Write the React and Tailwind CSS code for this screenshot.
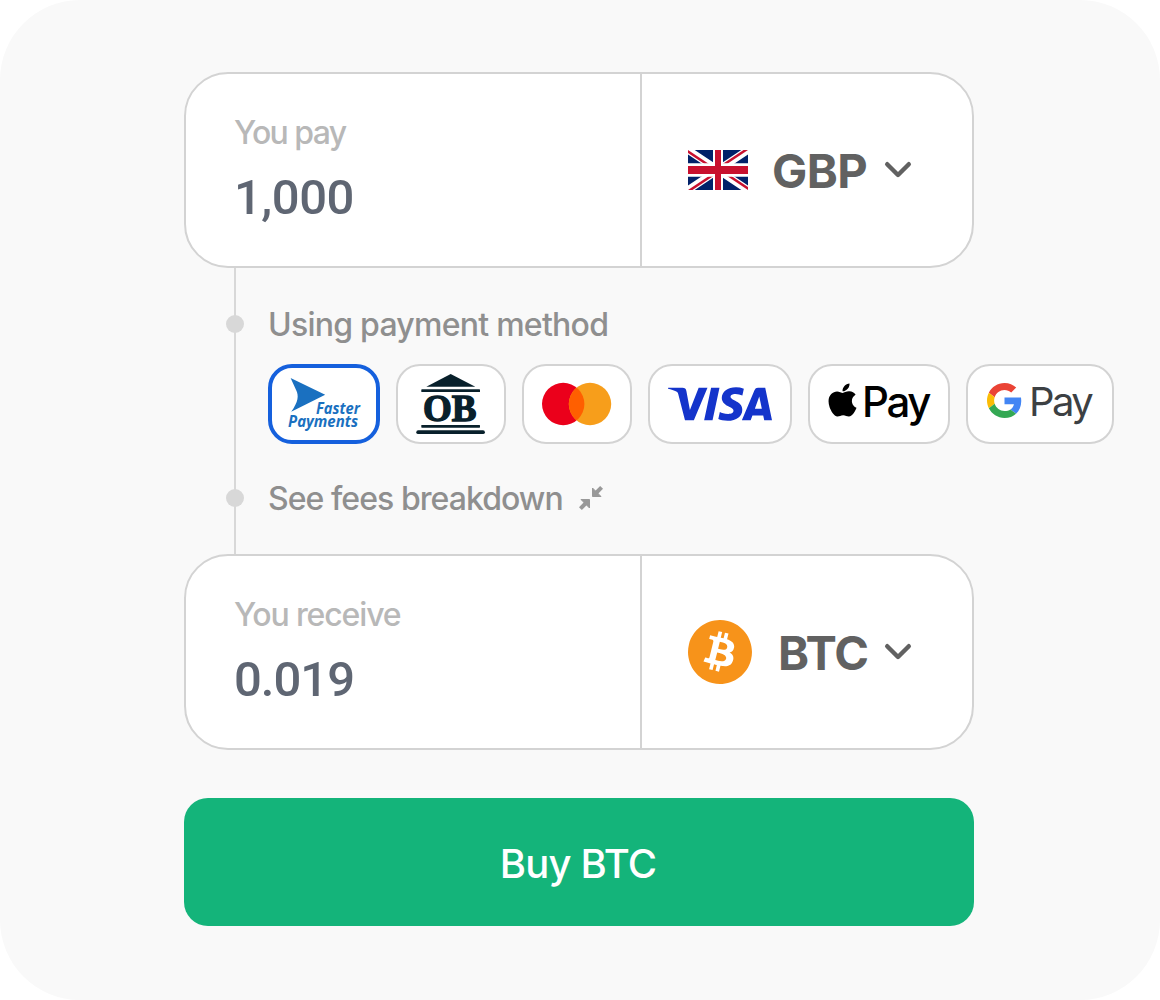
import { FaApple } from 'react-icons/fa';
import { SiBitcoin, SiVisa } from 'react-icons/si';

const ChevronDown = () => (
  <svg viewBox="0 0 28 20" className="w-7 h-5 shrink-0" fill="none" stroke="#616161" strokeWidth="4.4" strokeLinecap="round" strokeLinejoin="round">
    <path d="M3.2 4.2 L14 15 L24.8 4.2" />
  </svg>
);

const CollapseIcon = () => (
  <svg viewBox="0 0 24 24" className="w-6 h-6 ml-4 shrink-0 text-[#999]" fill="currentColor" stroke="currentColor" strokeLinejoin="round">
    <path d="M13.5 2 V10.5 H22 Z" strokeWidth="1" />
    <path d="M22.6 1.4 L16 8" strokeWidth="4" />
    <path d="M10.5 22 V13.5 H2 Z" strokeWidth="1" />
    <path d="M1.4 22.6 L8 16" strokeWidth="4" />
  </svg>
);

const UkFlag = () => (
  <svg viewBox="0 0 60 30" preserveAspectRatio="none" className="w-[60px] h-10 shrink-0">
    <clipPath id="uk-box">
      <path d="M0,0 v30 h60 v-30 z" />
    </clipPath>
    <clipPath id="uk-diagonals">
      <path d="M30,15 h30 v15 z v15 h-30 z h-30 v-15 z v-15 h30 z" />
    </clipPath>
    <g clipPath="url(#uk-box)">
      <path d="M0,0 v30 h60 v-30 z" fill="#012169" />
      <path d="M0,0 L60,30 M60,0 L0,30" stroke="#fff" strokeWidth="6" />
      <path d="M0,0 L60,30 M60,0 L0,30" clipPath="url(#uk-diagonals)" stroke="#c8102e" strokeWidth="4" />
      <path d="M30,0 v30 M0,15 h60" stroke="#fff" strokeWidth="10" />
      <path d="M30,0 v30 M0,15 h60" stroke="#c8102e" strokeWidth="6" />
    </g>
  </svg>
);

const FasterPayments = () => (
  <svg viewBox="4 4 104 72" className="w-[104px] h-[72px]">
    <path d="M22.6 14 L57.2 30.8 L23.2 47.8 C30.5 37.5 30.8 31.5 28.2 26.2 Z" fill="#1a70c0" />
    <g fill="#1a70c0" fontFamily="'Open Sans', 'Noto Sans', sans-serif" fontWeight="700" fontStyle="italic" fontSize="15.5">
      <text x="48" y="49.8" textLength="44" lengthAdjust="spacingAndGlyphs">Faster</text>
      <text x="20" y="62.5" textLength="70" lengthAdjust="spacingAndGlyphs">Payments</text>
    </g>
  </svg>
);

const OpenBanking = () => (
  <svg viewBox="2 2 106 76" className="w-[106px] h-[76px]" fill="#08202b">
    <path d="M54.7 10 L79.3 22.8 H30.3 Z" />
    <rect x="25.3" y="25.3" width="58.7" height="2.7" rx="0.6" />
    <text x="27" y="57.3" fontFamily="'Liberation Serif', serif" fontWeight="700" fontSize="38" textLength="53.5" lengthAdjust="spacingAndGlyphs" stroke="#08202b" strokeWidth="1.4">OB</text>
    <rect x="25.3" y="61" width="58.7" height="2.7" rx="0.6" />
    <rect x="20.3" y="66.3" width="68.6" height="3.8" rx="1.9" />
  </svg>
);

const Mastercard = () => (
  <svg viewBox="2 2 106 76" className="w-[106px] h-[76px]">
    <clipPath id="mc-left">
      <circle cx="41.2" cy="40" r="21.2" />
    </clipPath>
    <circle cx="41.2" cy="40" r="21.2" fill="#eb001b" />
    <circle cx="68" cy="40" r="21.2" fill="#f79e1b" />
    <circle cx="68" cy="40" r="21.2" fill="#ff5f00" clipPath="url(#mc-left)" />
  </svg>
);

const ApplePay = () => (
  <div className="flex items-center pb-1">
    <FaApple className="w-[31px] h-[38px] -mt-1 -ml-0.5 text-black" />
    <span className="ml-1 text-[42px] leading-none font-medium tracking-[-2.4px] text-black">Pay</span>
  </div>
);

const GooglePay = () => (
  <div className="flex items-center pb-1 pr-0.5">
    <svg viewBox="0 0 48 48" className="w-[35px] h-[35px] -mt-1">
      <path fill="#ea4335" d="M24 9.5c3.54 0 6.71 1.22 9.21 3.6l6.85-6.85C35.9 2.38 30.47 0 24 0 14.62 0 6.51 5.38 2.56 13.22l7.98 6.19C12.43 13.72 17.74 9.5 24 9.5z" />
      <path fill="#4285f4" d="M46.98 24.55c0-1.57-.15-3.09-.38-4.55H24v9.02h12.94c-.58 2.96-2.26 5.48-4.78 7.18l7.73 6c4.51-4.18 7.09-10.36 7.09-17.65z" />
      <path fill="#fbbc05" d="M10.53 28.59c-.48-1.45-.76-2.99-.76-4.59s.27-3.14.76-4.59l-7.98-6.19C.92 16.46 0 20.12 0 24c0 3.88.92 7.54 2.56 10.78l7.97-6.19z" />
      <path fill="#34a853" d="M24 48c6.48 0 11.93-2.13 15.89-5.81l-7.73-6c-2.15 1.45-4.92 2.3-8.16 2.3-6.26 0-11.57-4.22-13.47-9.91l-7.98 6.19C6.51 42.62 14.62 48 24 48z" />
    </svg>
    <span className="ml-[7px] text-[40px] leading-none font-normal tracking-[-2.6px] text-[#3c4043]">Pay</span>
  </div>
);

const methods = [
  { id: 'fps', width: 'w-[112px]', logo: <FasterPayments />, selected: true },
  { id: 'ob', width: 'w-[110px]', logo: <OpenBanking /> },
  { id: 'mc', width: 'w-[110px]', logo: <Mastercard /> },
  { id: 'visa', width: 'w-[144px]', logo: <SiVisa className="w-[104px] h-[104px] shrink-0 text-[#1434cb]" /> },
  { id: 'apple', width: 'w-[142px]', logo: <ApplePay /> },
  { id: 'google', width: 'w-[148px]', logo: <GooglePay /> },
];

const AmountCard = ({ label, labelClass, value, valueClass, children }) => (
  <div className="flex w-[790px] h-[196px] bg-white border-2 border-[#d3d3d3] rounded-[44px]">
    <div className="w-[454px] pl-12 pt-[38px]">
      <div className={`text-[32px] leading-[42px] font-medium text-[#b8b8b8] ${labelClass}`}>{label}</div>
      <div className={`mt-4 font-[Roboto,sans-serif] text-[49px] leading-[56px] font-medium text-[#5f6673] ${valueClass}`}>{value}</div>
    </div>
    <div className="flex flex-1 items-center pl-[46px] border-l-2 border-[#d3d3d3]">{children}</div>
  </div>
);

const Step = ({ label, labelClass, icon }) => (
  <div className="flex items-center h-10">
    <span className="w-[18px] h-[18px] -ml-[10px] rounded-full bg-[#d8d8d8]" />
    <span className={`ml-6 pt-0.5 text-[32px] leading-10 font-medium text-[#8f8f8f] ${labelClass}`}>{label}</span>
    {icon}
  </div>
);

const App = () => {
  return (
    <div className="w-[1160px] h-[1000px] pt-[72px] pl-[184px] overflow-hidden bg-[#f9f9f9] rounded-[80px] font-[Inter,sans-serif]">
      <AmountCard label="You pay" labelClass="tracking-[-1.6px]" value="1,000" valueClass="tracking-[-0.5px]">
        <UkFlag />
        <span className="w-[114px] pl-6 text-[47px] leading-none font-bold tracking-[-0.5px] text-[#616161]">GBP</span>
        <span className="ml-[22px]"><ChevronDown /></span>
      </AmountCard>

      <div className="ml-[50px] h-[286px] pt-9 border-l-2 border-[#d8d8d8]">
        <Step label="Using payment method" labelClass="tracking-[-0.75px]" />
        <div className="flex gap-4 mt-5 ml-8">
          {methods.map((m) => (
            <button
              key={m.id}
              className={`flex items-center justify-center shrink-0 h-20 bg-white rounded-[24px] ${m.width} ${m.selected ? 'border-4 border-[#1560dd]' : 'border-2 border-[#d3d3d3]'}`}
            >
              {m.logo}
            </button>
          ))}
        </div>
        <div className="mt-[34px]">
          <Step label="See fees breakdown" labelClass="tracking-[-0.95px]" icon={<CollapseIcon />} />
        </div>
      </div>

      <AmountCard label="You receive" labelClass="tracking-[-1.15px]" value="0.019" valueClass="tracking-[-1px]">
        <span className="w-16 h-16 shrink-0 rounded-full">
          <SiBitcoin className="w-16 h-16 text-[#f7931a]" />
        </span>
        <span className="w-[110px] pl-[26px] text-[47px] leading-none font-bold tracking-[-1px] text-[#616161]">BTC</span>
        <span className="ml-[22px]"><ChevronDown /></span>
      </AmountCard>

      <button className="flex items-center justify-center w-[790px] h-32 pt-1 pr-0.5 mt-12 rounded-[24px] bg-[#14b47a] text-[40px] font-medium tracking-[-0.8px] text-white">
        Buy BTC
      </button>
    </div>
  );
};

export default App;
